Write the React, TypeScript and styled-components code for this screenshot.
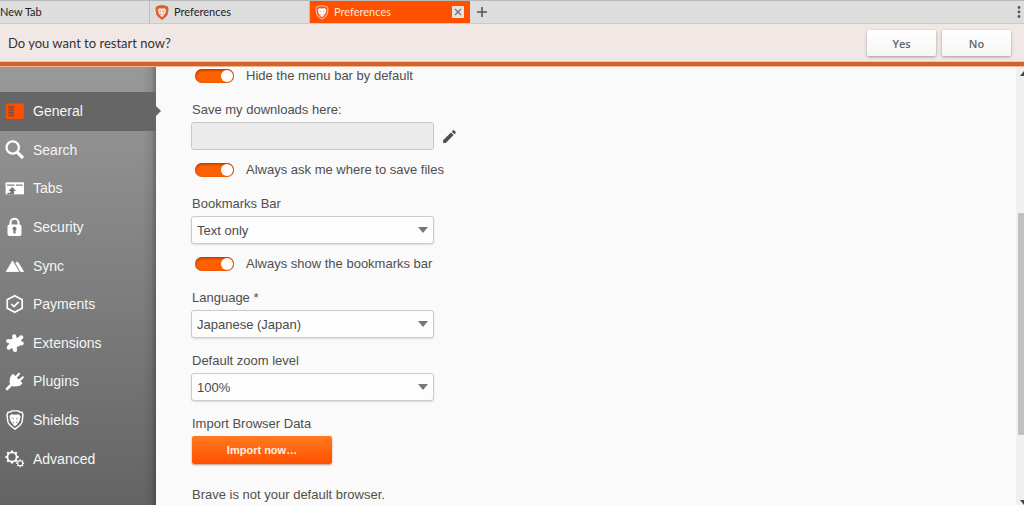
import React, { useState } from 'react';
import styled, { createGlobalStyle, css } from 'styled-components';
import { MdEdit } from 'react-icons/md';

const GlobalStyle = createGlobalStyle`
  *, *::before, *::after { box-sizing: border-box; }
  body {
    margin: 0;
    background: #fafafa;
    color: #4f4f4f;
    font-family: "Liberation Sans", Arial, sans-serif;
  }
  button, input, select { font-family: inherit; margin: 0; }
`;

const uiFont = 'Lato, "Open Sans", sans-serif';

const Window = styled.div`
  display: flex;
  flex-direction: column;
  height: 100vh;
  overflow: hidden;
`;

const TabBar = styled.header`
  display: flex;
  flex: none;
  height: 24px;
  background: #dddddd;
  border-top: 1px solid #b8b8b8;
  border-bottom: 1px solid #cbcbcb;
  font-family: ${uiFont};
`;

const Tab = styled.div<{ $active?: boolean; $cut?: boolean }>`
  display: flex;
  align-items: center;
  width: ${p => (p.$cut ? 150 : 160)}px;
  padding: 0 5px;
  border-right: 1px solid ${p => (p.$active ? '#ff5000' : '#bdbdbd')};
  background: ${p => (p.$active ? '#ff5000' : 'transparent')};
  color: ${p => (p.$active ? '#ffe6d6' : '#222')};
  ${p => p.$cut && css`padding-left: 0;`}
`;

const TabTitle = styled.button`
  display: flex;
  flex: 1;
  align-items: center;
  gap: 5px;
  padding: 0;
  border: 0;
  background: none;
  color: inherit;
  font-family: inherit;
  font-size: 11px;
  line-height: 20px;
`;

const CloseTab = styled.button`
  display: flex;
  width: 12px;
  height: 12px;
  padding: 2px;
  border: 0;
  border-radius: 1px;
  background: #e9e2df;
`;

const BarButton = styled.button`
  display: flex;
  align-items: center;
  padding: 0 6px;
  border: 0;
  background: none;
`;

const Spacer = styled.div`
  flex: 1;
`;

const MenuButton = styled(BarButton)`
  padding: 0 3px;
`;

const Notification = styled.div`
  display: flex;
  flex: none;
  align-items: center;
  gap: 6px;
  height: 42px;
  padding: 0 13px 0 8px;
  border-bottom: 4px solid #d0642c;
  box-shadow: inset 0 -1px #f7c4a4, 0 1px #f5b48c;
  background: #f1e8e5;
  font-family: ${uiFont};
  z-index: 1;
`;

const Message = styled.p`
  flex: 1;
  margin: 0;
  color: #333;
  font-size: 13px;
  line-height: 18px;
`;

const AnswerButton = styled.button`
  width: 69px;
  height: 26px;
  padding: 0;
  border: 0;
  border-radius: 2px;
  background: linear-gradient(#ffffff, #f6f6f6);
  box-shadow: 0 1px 3px rgba(0, 0, 0, 0.35);
  color: #666;
  font-family: "Open Sans", sans-serif;
  font-size: 11px;
  font-weight: 600;
`;

const Body = styled.div`
  display: flex;
  flex: 1;
  min-height: 0;
`;

const Sidebar = styled.nav`
  flex: none;
  width: 156px;
  padding-top: 26px;
  background:
    linear-gradient(to left, rgba(0, 0, 0, 0.26), rgba(0, 0, 0, 0.07) 5px, transparent 14px),
    linear-gradient(#999999, #646464);
`;

const NavList = styled.ul`
  display: grid;
  grid-auto-rows: 1fr;
  height: 386px;
  margin: 0;
  padding: 0;
  list-style: none;
`;

const NavLink = styled.a<{ $active?: boolean }>`
  position: relative;
  display: flex;
  align-items: center;
  gap: 8px;
  height: 100%;
  padding-left: 5px;
  color: #f6f6f6;
  font-size: 14px;
  text-decoration: none;
  svg { flex: none; }
  ${p => p.$active && css`
    background: #666;
    &::after {
      content: '';
      position: absolute;
      left: 100%;
      top: calc(50% - 5px);
      border: 5px solid transparent;
      border-left-color: #666;
      border-right: 0;
    }
  `}
`;

const Content = styled.main`
  display: flex;
  flex: 1;
  flex-direction: column;
  gap: 14px;
  min-width: 0;
  padding: 1px 35px 0;
  overflow: hidden;
`;

const Section = styled.section`
  display: flex;
  flex: none;
  flex-direction: column;
  gap: 11px;
  padding-bottom: 2px;
`;

const Field = styled.div`
  display: flex;
  flex: none;
  flex-direction: column;
  align-items: flex-start;
  gap: 3px;
`;

const FieldLabel = styled.label`
  padding-left: 1px;
  font-size: 13px;
  line-height: 18px;
`;

const FieldRow = styled.div`
  display: flex;
  align-items: center;
  gap: 7px;
`;

const PathInput = styled.input`
  width: 243px;
  height: 28px;
  padding: 0 5px;
  border: 1px solid #c8c8c8;
  border-radius: 3px;
  background: #ebebeb;
  color: inherit;
  font-size: 13px;
`;

const EditButton = styled.button`
  display: flex;
  padding: 0;
  border: 0;
  background: none;
  color: #4f4f4f;
`;

const SelectBox = styled.div`
  position: relative;
  width: 243px;
  &::after {
    content: '';
    position: absolute;
    top: 11px;
    right: 6px;
    border: 5px solid transparent;
    border-top: 6px solid #777;
    border-bottom: 0;
    pointer-events: none;
  }
`;

const Select = styled.select`
  display: block;
  width: 100%;
  height: 28px;
  padding: 0 20px 0 5px;
  appearance: none;
  border: 1px solid #cbcbcb;
  border-radius: 3px;
  background: #fdfdfd;
  box-shadow: 0 1px 2px rgba(0, 0, 0, 0.12);
  color: #4a4a4a;
  font-size: 13px;
`;

const ToggleRow = styled.label`
  display: flex;
  align-items: center;
  gap: 12px;
  height: 18px;
  padding-left: 4px;
  font-size: 13px;
  line-height: 18px;
`;

const Toggle = styled.input`
  display: flex;
  align-items: center;
  width: 39px;
  height: 14px;
  padding: 0 1px;
  appearance: none;
  border-radius: 7px;
  background: #b5b5b5;
  box-shadow: inset 0 1px 3px rgba(110, 40, 0, 0.75);
  &::before {
    content: '';
    width: 12px;
    height: 12px;
    border-radius: 50%;
    background: #fff;
  }
  &:checked {
    justify-content: flex-end;
    background: #ff6000;
  }
`;

const ImportButton = styled.button`
  width: 140px;
  height: 28px;
  margin-left: 1px;
  padding: 0;
  border: 0;
  border-radius: 2px;
  background: linear-gradient(#ff7a1f, #ff5000);
  box-shadow: 0 1px 2px rgba(120, 40, 0, 0.45);
  color: #fff0e4;
  font-size: 11px;
  font-weight: 700;
`;

const Status = styled.p`
  flex: none;
  margin: 8px 0 0;
  padding-left: 1px;
  font-size: 13px;
  line-height: 18px;
`;

const ScrollTrack = styled.div`
  display: flex;
  flex: none;
  flex-direction: column;
  align-items: flex-end;
  width: 8px;
  padding: 5px 0 0;
  background: #f0f0f0;
  overflow: hidden;
`;

const ScrollThumb = styled.div`
  flex: 0 0 51%;
  width: 6px;
  background: #c1c1c1;
`;

const TrackSpace = styled.div<{ $grow: number }>`
  flex: ${p => p.$grow} 0 0;
`;

const ScrollArrow = ({ down = false }: { down?: boolean }) => (
  <svg width="4" height="5" viewBox="0 0 4 5" aria-hidden="true">
    <path d={down ? 'M0 0H4V5z' : 'M4 0V5H0z'} fill="#444" />
  </svg>
);

const LionShield = ({ width, height, shield, face, edge }: { width: number; height: number; shield: string; face: string; edge: string }) => (
  <svg width={width} height={height} viewBox="0 0 16 18" aria-hidden="true">
    <path d="M3.6 1.8 5.4.8h5.2l1.8 1 1.9.3.9 2.2-.8 6.2q-.5 2.8-6.4 6.7Q2.1 13.3 1.6 10.5L.8 4.3l.9-2.2z" fill={shield} stroke={edge} strokeWidth="1.3" strokeLinejoin="round" />
    <path d="M4.6 3.8 8 4.3l3.4-.5 1.7 2.1-1.2 4.3L9.4 13.6 8 14.7l-1.4-1.1L4.1 10.2 2.9 5.9z" fill={face} />
    <path d="M4.500 6.500 7.100 7.400 6.700 8.600zM11.500 6.500 8.900 7.400l.4 1.200zM5.500 10.200 7.300 11 6.800 12.200zM10.500 10.200 8.700 11l.5 1.200z" fill={shield === 'none' ? '#6c6c6c' : shield} opacity=".75" />
  </svg>
);

const GeneralIcon = () => (
  <svg width="20" height="20" viewBox="0 0 20 20" aria-hidden="true">
    <rect x=".8" y="2.500" width="18" height="15.500" rx="1.500" fill="#ff5000" />
    <rect x="2.500" y="4.500" width="7" height="11.500" fill="#d24d12" />
    <path d="M3.500 6H8.700M3.500 8.800H8.700M3.500 11.600H8.700M3.500 14.400H8.700" stroke="#6b5348" strokeWidth="1.300" />
  </svg>
);

const SearchIcon = () => (
  <svg width="20" height="20" viewBox="0 0 20 20" fill="none" stroke="#fff" aria-hidden="true">
    <circle cx="7.700" cy="7.500" r="6.200" strokeWidth="2.200" />
    <path d="M12.300 12.300 18 18" strokeWidth="3.200" />
  </svg>
);

const TabsIcon = () => (
  <svg width="20" height="20" viewBox="0 0 20 20" aria-hidden="true">
    <path d="M.6 4.300H19V16.300H.6z" fill="#fff" />
    <path d="M2 7.200H9.500M11 7.200H17.600" stroke="#7f7f7f" strokeWidth="1.300" />
    <path d="M7.200 9 11 13H9V16.300H2.500V14.800H5.500V13H3.400z" fill="#777" />
  </svg>
);

const SecurityIcon = () => (
  <svg width="20" height="20" viewBox="0 0 20 20" aria-hidden="true">
    <path d="M5.500 9V5.700a4 4 0 0 1 8 0V9" fill="none" stroke="#fff" strokeWidth="2" />
    <rect x="2.500" y="7.500" width="14" height="11.500" rx="2" fill="#fff" />
    <path d="M9.500 9.800a2 2 0 0 1 1.100 3.700v3H8.400v-3a2 2 0 0 1 1.100-3.700z" fill="#7c7c7c" />
  </svg>
);

const SyncIcon = () => (
  <svg width="20" height="20" viewBox="0 0 20 20" aria-hidden="true">
    <path d="M1.300 15.500 7.500 5 13.700 15.500zM10.800 6.800q1-1.700 2.400 0L18.600 15.500H15.500z" fill="#fff" stroke="#fff" strokeWidth=".8" strokeLinejoin="round" />
  </svg>
);

const PaymentsIcon = () => (
  <svg width="20" height="20" viewBox="0 0 20 20" fill="none" stroke="#fff" strokeWidth="1.700" strokeLinejoin="round" aria-hidden="true">
    <path d="M9.700 1.700 17.200 5.800V14.200L9.700 18.300 2.200 14.200V5.800z" />
    <path d="M6.300 10 9 12.600 13.700 7.800" />
  </svg>
);

const ExtensionsIcon = () => (
  <svg width="20" height="20" viewBox="0 0 20 20" fill="#fff" aria-hidden="true">
    <path d="M8.300 4.800 10.500 4.500 11.700 6.300 14.500 4.500 16 6 14.800 8 15.500 10.500 13.500 12.500 11.300 12.300 10.800 15.500 8.500 16 7 13.800 4.500 15 3.500 13 5.300 11 4.300 9.200 5 7.200 8 7.200z" stroke="#fff" strokeWidth="1.800" strokeLinejoin="round" />
    <circle cx="9.200" cy="3.300" r="2.100" />
    <circle cx="16.200" cy="4.300" r="2.100" />
    <circle cx="3.200" cy="8" r="2.100" />
    <circle cx="16.600" cy="10.400" r="2.100" />
    <circle cx="3.800" cy="14.700" r="2.100" />
    <circle cx="10" cy="16.900" r="2.100" />
  </svg>
);

const PluginsIcon = () => (
  <svg width="20" height="20" viewBox="0 0 20 20" stroke="#fff" strokeLinecap="round" strokeLinejoin="round" aria-hidden="true">
    <path d="M8 3.800 16.500 12.200Q15 14.200 12.800 14.500L8.300 14.800 5.300 11.500 5.700 7.500Q6.200 5.200 8 3.800z" fill="#fff" strokeWidth="1.600" />
    <path d="M2 18 6.500 13.500" strokeWidth="2.600" />
    <path d="M11 6 14 2.800M14.500 9.500 17.800 6.300" strokeWidth="2.200" />
  </svg>
);

const gearPath = (cx: number, cy: number, outer: number, inner: number, teeth: number) => {
  const points: string[] = [];
  for (let i = 0; i < teeth; i++) {
    const step = (Math.PI * 2) / teeth;
    [[-0.3, inner], [-0.2, outer], [0.2, outer], [0.3, inner]].forEach(([offset, radius]) => {
      const angle = (i + offset) * step;
      points.push(`${(cx + Math.cos(angle) * radius).toFixed(2)} ${(cy + Math.sin(angle) * radius).toFixed(2)}`);
    });
  }
  return `M${points.join('L')}z`;
};

const AdvancedIcon = () => (
  <svg width="20" height="20" viewBox="0 0 20 20" aria-hidden="true">
    <path fillRule="evenodd" fill="#fff" d={`${gearPath(7, 8, 6.7, 5.4, 8)}M3.300 8a3.700 3.700 0 1 0 7.400 0a3.700 3.700 0 1 0-7.400 0z`} />
    <path fillRule="evenodd" fill="#fff" d={`${gearPath(15.2, 14.3, 4, 3, 8)}M13.200 14.300a2 2 0 1 0 4 0a2 2 0 1 0-4 0z`} />
  </svg>
);

const NAV_ITEMS = [
  { name: 'General', icon: <GeneralIcon /> },
  { name: 'Search', icon: <SearchIcon /> },
  { name: 'Tabs', icon: <TabsIcon /> },
  { name: 'Security', icon: <SecurityIcon /> },
  { name: 'Sync', icon: <SyncIcon /> },
  { name: 'Payments', icon: <PaymentsIcon /> },
  { name: 'Extensions', icon: <ExtensionsIcon /> },
  { name: 'Plugins', icon: <PluginsIcon /> },
  { name: 'Shields', icon: <LionShield width={20} height={20} shield="none" face="#fff" edge="#fff" /> },
  { name: 'Advanced', icon: <AdvancedIcon /> },
];

function Switch({ label }: { label: string }) {
  const [on, setOn] = useState(true);
  return (
    <ToggleRow>
      <Toggle type="checkbox" checked={on} onChange={e => setOn(e.target.checked)} />
      {label}
    </ToggleRow>
  );
}

function SelectField({ id, label, value }: { id: string; label: string; value: string }) {
  return (
    <Field>
      <FieldLabel htmlFor={id}>{label}</FieldLabel>
      <SelectBox>
        <Select id={id} defaultValue={value}>
          <option>{value}</option>
        </Select>
      </SelectBox>
    </Field>
  );
}

export default function App() {
  return (
    <Window>
      <GlobalStyle />
      <TabBar>
        <Tab $cut><TabTitle>New Tab</TabTitle></Tab>
        <Tab>
          <TabTitle><LionShield width={14} height={15} shield="#d9622d" face="#f6ded2" edge="#d9622d" />Preferences</TabTitle>
        </Tab>
        <Tab $active>
          <TabTitle><LionShield width={14} height={15} shield="#e8622d" face="#fff" edge="#ffb48c" />Preferences</TabTitle>
          <CloseTab aria-label="Close tab">
            <svg width="8" height="8" viewBox="0 0 8 8" stroke="#6d747c" strokeWidth="1.300" aria-hidden="true"><path d="M1 1 7 7M7 1 1 7" /></svg>
          </CloseTab>
        </Tab>
        <BarButton aria-label="New tab">
          <svg width="12" height="12" viewBox="0 0 12 12" stroke="#555" strokeWidth="1.600" aria-hidden="true"><path d="M6 1V11M1 6H11" /></svg>
        </BarButton>
        <Spacer />
        <MenuButton aria-label="Menu">
          <svg width="4" height="14" viewBox="0 0 4 14" fill="#555" aria-hidden="true">
            <circle cx="2" cy="2.500" r="1.400" /><circle cx="2" cy="7" r="1.400" /><circle cx="2" cy="11.500" r="1.400" />
          </svg>
        </MenuButton>
      </TabBar>

      <Notification role="alert">
        <Message>Do you want to restart now?</Message>
        <AnswerButton>Yes</AnswerButton>
        <AnswerButton>No</AnswerButton>
      </Notification>

      <Body>
        <Sidebar>
          <NavList>
            {NAV_ITEMS.map((item, i) => (
              <li key={item.name}>
                <NavLink href={`#${item.name.toLowerCase()}`} $active={i === 0}>{item.icon}{item.name}</NavLink>
              </li>
            ))}
          </NavList>
        </Sidebar>

        <Content>
          <Section><Switch label="Hide the menu bar by default" /></Section>
          <Section>
            <Field>
              <FieldLabel htmlFor="downloads">Save my downloads here:</FieldLabel>
              <FieldRow>
                <PathInput id="downloads" type="text" readOnly />
                <EditButton aria-label="Change download folder"><MdEdit size={17} /></EditButton>
              </FieldRow>
            </Field>
            <Switch label="Always ask me where to save files" />
          </Section>
          <Section>
            <SelectField id="bookmarks" label="Bookmarks Bar" value="Text only" />
            <Switch label="Always show the bookmarks bar" />
          </Section>
          <SelectField id="language" label="Language *" value="Japanese (Japan)" />
          <SelectField id="zoom" label="Default zoom level" value="100%" />
          <Field>
            <FieldLabel as="span">Import Browser Data</FieldLabel>
            <ImportButton>Import now…</ImportButton>
          </Field>
          <Status>Brave is not your default browser.</Status>
        </Content>

        <ScrollTrack aria-hidden="true">
          <ScrollArrow />
          <TrackSpace $grow={21} />
          <ScrollThumb />
          <TrackSpace $grow={10} />
          <ScrollArrow down />
        </ScrollTrack>
      </Body>
    </Window>
  );
}
